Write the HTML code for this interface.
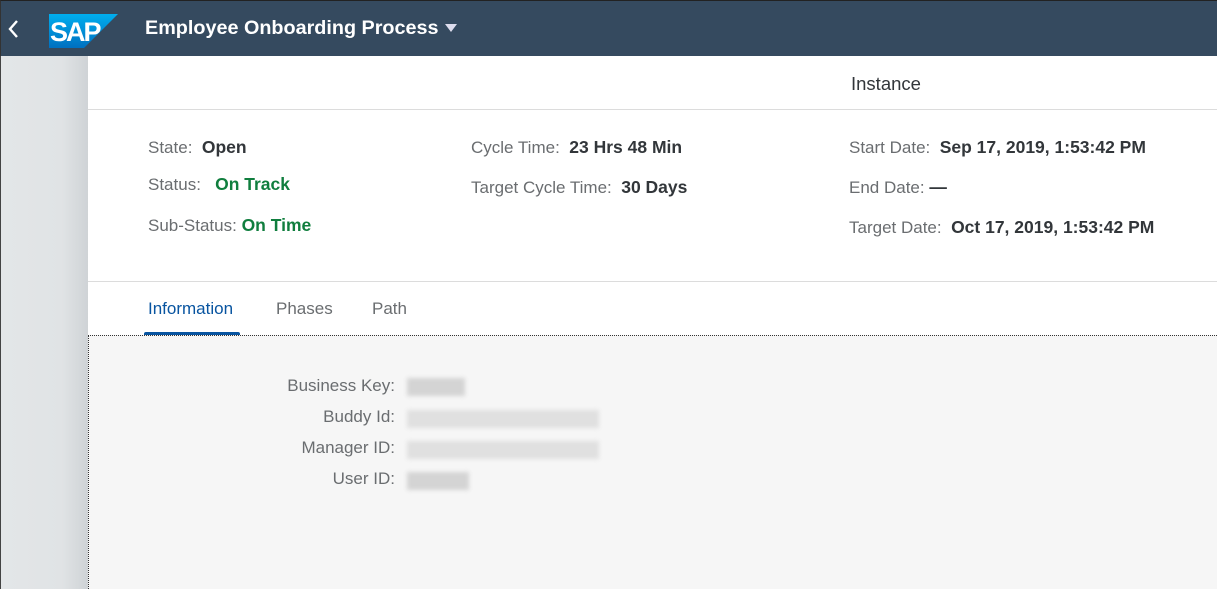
<!DOCTYPE html>
<html><head><meta charset="utf-8"><style>
*{margin:0;padding:0;box-sizing:border-box}
body{width:1217px;height:589px;overflow:hidden;font-family:"Liberation Sans",Arial,sans-serif;background:#fff;position:relative}
.hdr{position:absolute;left:0;top:0;width:1217px;height:56px;background:#354a5f;border-top:1px solid #222;border-left:1px solid #333}
.t{position:absolute;white-space:nowrap;font-size:17px;color:#6a6d70}
b{color:#32363a;font-size:17.5px}
.g{color:#107e3e;font-weight:bold;font-size:17.5px}
.bar{position:absolute;height:18px;background:#d4d4d4;filter:blur(2px)}
</style></head><body>
<div class="hdr">
<svg style="position:absolute;left:6px;top:18px" width="12" height="20"><path d="M10 2 L3 10 L10 18" stroke="#fff" stroke-width="2.4" fill="none"/></svg>
<svg style="position:absolute;left:48px;top:13px" width="70" height="34"><defs><linearGradient id="a" x1="0" x2="0" y1="0" y2="1"><stop offset="0" stop-color="#00aeef"/><stop offset="1" stop-color="#0070c0"/></linearGradient></defs><polygon points="0,0 69,0 35,34 0,34" fill="url(#a)"/><text x="1" y="27" font-family="Liberation Sans" font-weight="bold" font-size="27" fill="#fff" letter-spacing="-2">SAP</text></svg>
<div style="position:absolute;left:144px;top:16px;color:#fff;font-weight:bold;font-size:19.8px">Employee Onboarding Process</div>
<svg style="position:absolute;left:444px;top:23px" width="12" height="10"><polygon points="0,0 12,0 6,8" fill="#dde"/></svg>
</div>
<div style="position:absolute;left:0;top:56px;width:88px;height:533px;background:linear-gradient(90deg,#e3e6e8 0,#e0e3e5 70%,#cfd3d6 100%);border-left:1px solid #444"></div>
<div style="position:absolute;left:88px;top:109px;width:1129px;height:1px;background:#dcdcdc"></div>
<div style="position:absolute;left:88px;top:281px;width:1129px;height:1px;background:#dcdcdc"></div>
<div class="t" style="left:851px;top:73px;font-size:18.5px;color:#32363a">Instance</div>
<div class="t" style="left:148px;top:137px">State:&nbsp; <b>Open</b></div>
<div class="t" style="left:148px;top:174px">Status:&nbsp;&nbsp; <span class="g">On Track</span></div>
<div class="t" style="left:148px;top:215px">Sub-Status: <span class="g">On Time</span></div>
<div class="t" style="left:471px;top:137px">Cycle Time:&nbsp; <b>23 Hrs 48 Min</b></div>
<div class="t" style="left:471px;top:177px">Target Cycle Time:&nbsp; <b>30 Days</b></div>
<div class="t" style="left:849px;top:137px">Start Date:&nbsp; <b>Sep 17, 2019, 1:53:42 PM</b></div>
<div class="t" style="left:849px;top:177px">End Date: <b>—</b></div>
<div class="t" style="left:849px;top:217px">Target Date:&nbsp; <b>Oct 17, 2019, 1:53:42 PM</b></div>
<div class="t" style="left:148px;top:299px;color:#0854a0">Information</div>
<div class="t" style="left:276px;top:299px">Phases</div>
<div class="t" style="left:372px;top:299px">Path</div>
<div style="position:absolute;left:144px;top:332px;width:96px;height:4px;background:#0854a0;border-radius:2px 2px 0 0"></div>
<div style="position:absolute;left:88px;top:335px;width:1129px;height:254px;background:#f6f6f6;border-top:1px dotted #333;border-left:1px dotted #333"></div>
<div class="t" style="left:200px;width:195px;text-align:right;top:376px">Business Key:</div>
<div class="t" style="left:200px;width:195px;text-align:right;top:407px">Buddy Id:</div>
<div class="t" style="left:200px;width:195px;text-align:right;top:438px">Manager ID:</div>
<div class="t" style="left:200px;width:195px;text-align:right;top:469px">User ID:</div>
<div class="bar" style="left:407px;top:378px;width:58px"></div>
<div class="bar" style="left:407px;top:410px;width:192px;background:#e0e0e0"></div>
<div class="bar" style="left:407px;top:441px;width:192px;background:#e0e0e0"></div>
<div class="bar" style="left:407px;top:472px;width:62px"></div>
</body></html>
